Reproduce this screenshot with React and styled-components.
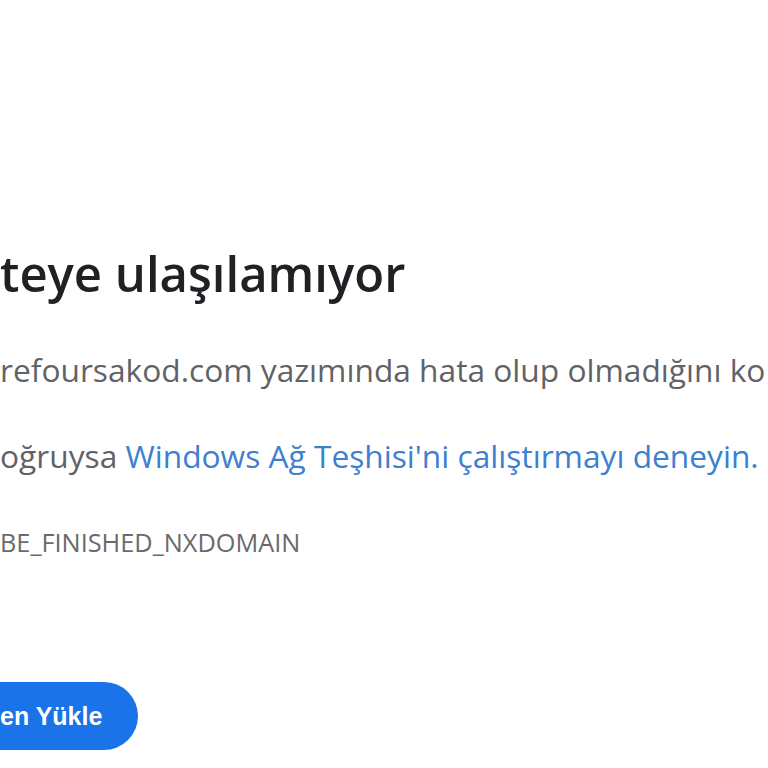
import React from "react";
import styled, { createGlobalStyle } from "styled-components";

const GlobalStyle = createGlobalStyle`
  html, body {
    margin: 0;
    padding: 0;
    background: #ffffff;
  }
  body {
    width: 768px;
    height: 768px;
    overflow: hidden;
    font-family: "Open Sans", "Noto Sans", sans-serif;
  }
`;

const Page = styled.div`
  width: 768px;
  height: 768px;
  overflow: hidden;
  display: flex;
  flex-direction: column;
  padding-top: 243px;
  box-sizing: border-box;
`;

const Heading = styled.h1`
  margin: 0;
  font-size: 49px;
  font-weight: 600;
  color: #202124;
  line-height: 60px;
  white-space: nowrap;
`;

const Para = styled.p`
  margin: ${(p) => p.$top}px 0 0;
  font-size: 31.7px;
  color: #5f6368;
  line-height: 44px;
  white-space: nowrap;
`;

const Link = styled.span`
  color: #3d7fd1;
`;

const Code = styled.div`
  margin-top: 47px;
  font-size: 25.3px;
  color: #6a6a6a;
  line-height: 34px;
  white-space: nowrap;
`;

const ReloadButton = styled.button`
  margin-top: 123px;
  align-self: flex-start;
  margin-left: -40px;
  height: 68px;
  padding: 0 36px 0 40px;
  border: none;
  border-radius: 34px;
  background: #1a73e8;
  color: #ffffff;
  font-family: "Liberation Sans", Arial, sans-serif;
  font-size: 25px;
  font-weight: 700;
  cursor: pointer;
`;

export default function App() {
  return (
    <>
      <GlobalStyle />
      <Page>
        <Heading>teye ulaşılamıyor</Heading>
        <Para $top={45}>refoursakod.com yazımında hata olup olmadığını ko</Para>
        <Para $top={42}>
          oğruysa <Link>Windows Ağ Teşhisi'ni çalıştırmayı deneyin.</Link>
        </Para>
        <Code>BE_FINISHED_NXDOMAIN</Code>
        <ReloadButton>en Yükle</ReloadButton>
      </Page>
    </>
  );
}
